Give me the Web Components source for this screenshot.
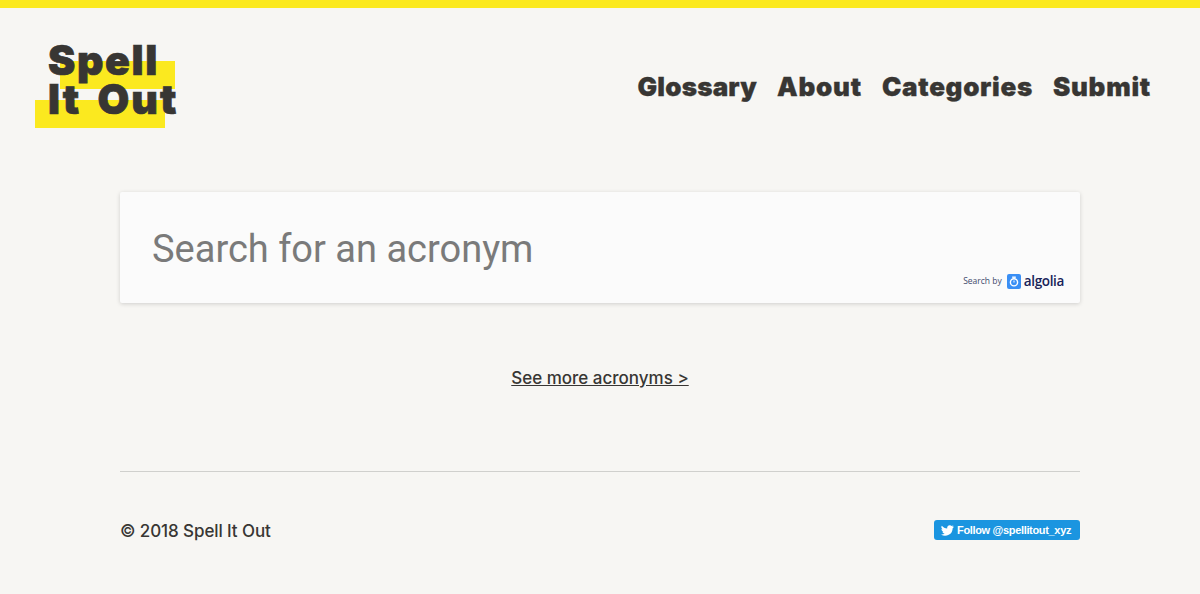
<!DOCTYPE html>
<html><head><meta charset="utf-8"><style>
html,body{margin:0;padding:0;background:#f7f6f3;}
body{height:594px;overflow:hidden;font-family:"Inter","Liberation Sans",sans-serif;color:#383633;}
</style></head><body>
<site-page>
<site-header slot="header"></site-header>
<search-box></search-box>
<more-link></more-link>
<site-footer></site-footer>
</site-page>
<template id="tp"><style>
:host{display:flex;flex-direction:column;height:594px;box-sizing:border-box;border-top:8px solid #fbe91f;}
</style><slot name="header"></slot><slot></slot></template>
<template id="th"><style>
:host{display:flex;justify-content:space-between;align-items:center;height:120px;padding:32px 49px 0 35px;box-sizing:border-box;margin-bottom:64px;}
.logo{position:relative;width:150px;height:88px;font:900 41px/39px Inter,sans-serif;letter-spacing:1.6px;word-spacing:5px;-webkit-text-stroke:.7px currentColor;}
.logo i{position:absolute;background:#fbe91f;height:28px;}
.logo i.a{left:25px;top:21px;width:115px;}
.logo i.b{left:0;top:60px;width:130px;}
.logo span{position:absolute;left:13px;top:0;white-space:pre;}
.logo span.s{top:1px}.logo span.t{top:40px;letter-spacing:2.1px;word-spacing:6px;}
nav{display:flex;gap:20px;font:900 26px/30px Inter,sans-serif;padding-top:6px;-webkit-text-stroke:.3px currentColor;}
nav span:nth-child(1){letter-spacing:.2px}
nav span:nth-child(2){letter-spacing:.8px}
nav span:nth-child(3){letter-spacing:.7px}
nav span:nth-child(4){letter-spacing:.75px}
</style><div class="logo"><i class="a"></i><i class="b"></i><span class="s">Spell</span><span class="t">It Out</span></div>
<nav><span>Glossary</span><span>About</span><span>Categories</span><span>Submit</span></nav></template>
<template id="ts"><style>
:host{display:flex;align-items:center;position:relative;box-sizing:border-box;width:960px;height:111px;margin:0 auto;background:#fbfbfb;box-shadow:0 1px 4px rgba(0,0,0,.16);padding:0 32px 0;border-radius:2px;}
.q{font:400 38px/46px Roboto,sans-serif;color:#7a7a7a;position:relative;top:1px;}
.by{position:absolute;right:16px;bottom:14px;display:flex;align-items:center;font:500 8.500px/16px "Open Sans",sans-serif;color:#414a6b;}
.by b{font:600 13.500px/16px "Open Sans",sans-serif;color:#182359;letter-spacing:-.35px;margin-left:3px;}
svg{display:block;margin-left:5px;}
</style><div class="q">Search for an acronym</div>
<div class="by"><span>Search by</span><svg width="14" height="15" viewBox="0 0 14 15"><rect width="14" height="15" rx="2" fill="#3a8ff5"/><circle cx="7" cy="8.300" r="3.600" fill="none" stroke="#fff" stroke-width="1.400"/><path d="M5.200 3.200h3.600" stroke="#fff" stroke-width="1.400"/><path d="M7 6.500v2" stroke="#fff" stroke-width="1"/></svg><b>algolia</b></div></template>
<template id="tm"><style>
:host{display:block;text-align:center;margin-top:64px;font:500 17px/22px Inter,sans-serif;}
a{color:inherit;text-decoration:underline;}
</style><a>See more acronyms &gt;</a></template>
<template id="tf"><style>
:host{display:flex;justify-content:space-between;align-items:flex-start;box-sizing:border-box;width:960px;margin:82px auto 0;border-top:1px solid #d0d0cd;padding-top:48px;font:500 17px/22px Inter,sans-serif;}
.c{padding-top:0;letter-spacing:-.1px;}
.tw{display:flex;align-items:center;gap:3px;height:20px;width:146px;box-sizing:border-box;padding:0 8px 0 7px;background:#1b95e0;color:#fff;border-radius:3px;font:700 11px/20px "Liberation Sans",sans-serif;letter-spacing:-.33px;white-space:nowrap;}
.tw svg{flex:none;}
</style><div class="c">© 2018 Spell It Out</div>
<div class="tw"><svg width="13" height="11" viewBox="0 0 24 20"><path fill="#fff" d="M23.600 2.400c-.9.4-1.800.7-2.800.8 1-.6 1.800-1.600 2.100-2.700-.9.6-2 1-3.100 1.200A4.900 4.900 0 0 0 11.500 6.200C7.500 6 3.900 4.100 1.500 1.100A4.900 4.900 0 0 0 3 7.700c-.8 0-1.500-.2-2.200-.6v.1c0 2.400 1.700 4.400 3.900 4.800-.7.2-1.500.2-2.200.1.6 1.900 2.400 3.300 4.600 3.400A9.900 9.900 0 0 1 0 17.500 14 14 0 0 0 21.500 5.700c1-.7 1.800-1.500 2.100-3.300z"/></svg><span>Follow @spellitout_xyz</span></div></template>
<script>
function def(n,t){customElements.define(n,class extends HTMLElement{constructor(){super();this.attachShadow({mode:"open"}).appendChild(document.getElementById(t).content.cloneNode(true));}});}
def("site-page","tp");def("site-header","th");def("search-box","ts");def("more-link","tm");def("site-footer","tf");
</script>
</body></html>
